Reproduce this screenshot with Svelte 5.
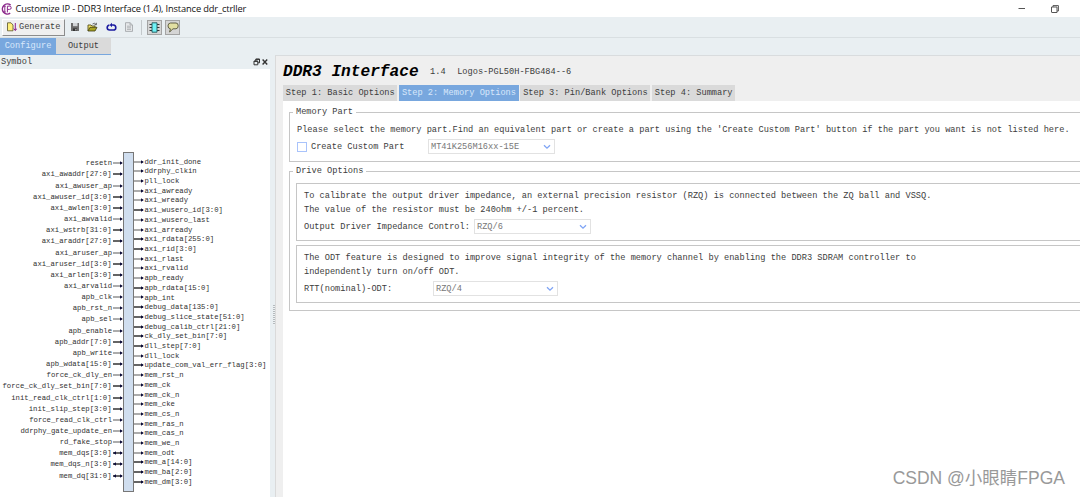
<script lang="ts">
  type Pin = { name: string; bus?: boolean; inout?: boolean };

  const toPin = (name: string): Pin => ({
    name,
    bus: name.endsWith(']'),
    inout: name.startsWith('mem_dq'),
  });

  const inputs = [
    'resetn', 'axi_awaddr[27:0]', 'axi_awuser_ap', 'axi_awuser_id[3:0]', 'axi_awlen[3:0]',
    'axi_awvalid', 'axi_wstrb[31:0]', 'axi_araddr[27:0]', 'axi_aruser_ap', 'axi_aruser_id[3:0]',
    'axi_arlen[3:0]', 'axi_arvalid', 'apb_clk', 'apb_rst_n', 'apb_sel', 'apb_enable',
    'apb_addr[7:0]', 'apb_write', 'apb_wdata[15:0]', 'force_ck_dly_en',
    'force_ck_dly_set_bin[7:0]', 'init_read_clk_ctrl[1:0]', 'init_slip_step[3:0]',
    'force_read_clk_ctrl', 'ddrphy_gate_update_en', 'rd_fake_stop', 'mem_dqs[3:0]',
    'mem_dqs_n[3:0]', 'mem_dq[31:0]',
  ].map(toPin);

  const outputs = [
    'ddr_init_done', 'ddrphy_clkin', 'pll_lock', 'axi_awready', 'axi_wready',
    'axi_wusero_id[3:0]', 'axi_wusero_last', 'axi_arready', 'axi_rdata[255:0]', 'axi_rid[3:0]',
    'axi_rlast', 'axi_rvalid', 'apb_ready', 'apb_rdata[15:0]', 'apb_int', 'debug_data[135:0]',
    'debug_slice_state[51:0]', 'debug_calib_ctrl[21:0]', 'ck_dly_set_bin[7:0]', 'dll_step[7:0]',
    'dll_lock', 'update_com_val_err_flag[3:0]', 'mem_rst_n', 'mem_ck', 'mem_ck_n', 'mem_cke',
    'mem_cs_n', 'mem_ras_n', 'mem_cas_n', 'mem_we_n', 'mem_odt', 'mem_a[14:0]', 'mem_ba[2:0]',
    'mem_dm[3:0]',
  ].map(toPin);

  const steps = [
    'Step 1: Basic Options',
    'Step 2: Memory Options',
    'Step 3: Pin/Bank Options',
    'Step 4: Summary',
  ];

  let view = $state('Configure');
  let step = $state(1);
  let customPart = $state(false);
</script>

{#snippet wire(pin: Pin)}
  <svg class="wire" width="10" height="6" viewBox="0 0 10 6">
    <path d="M0 3H9" stroke="#111" stroke-width={pin.bus ? 1.3 : 0.7} />
    <path d="M7 1.2L9.8 3L7 4.8Z" fill="#0a0a38" />
    {#if pin.inout}<path d="M3 1.2L0.2 3L3 4.8Z" fill="#0a0a38" />{/if}
  </svg>
{/snippet}

{#snippet combo(value: string, width: number)}
  <button class="combo" style="width: {width}px">
    <span>{value}</span>
    <svg width="8" height="6" viewBox="0 0 8 6">
      <path d="M1 1.2L4 4.2L7 1.2" fill="none" stroke="#7fa4f5" stroke-width="1.3" />
    </svg>
  </button>
{/snippet}

<div class="window">
  <header class="titlebar">
    <svg width="13" height="14" viewBox="0 0 13 14" fill="none" stroke="#8c2a8c">
      <path d="M10.6 3.2A5 5 0 1 0 10.2 11.2" stroke-width="1.5" />
      <path d="M4.8 4.2V10M3.8 4.2h2M3.8 10h2M7.4 10.4V4.2h2.2a1.6 1.6 0 0 1 0 3.2H7.4" stroke-width="1" />
    </svg>
    <span class="caption">Customize IP - DDR3 Interface (1.4), Instance ddr_ctrller</span>
    <svg class="min" width="8" height="8" viewBox="0 0 8 8"><path d="M0.5 3.5H7" stroke="#555" /></svg>
    <svg class="max" width="8" height="8" viewBox="0 0 8 8" fill="none" stroke="#555">
      <path d="M0.5 2H6V7.5H1Q0.5 7.5 0.5 7ZM2 2V0.6H7.4V6H6" stroke-width="1" />
    </svg>
  </header>

  <div class="toolbar">
    <button class="generate">
      <svg width="10" height="10" viewBox="0 0 10 10">
        <path d="M0.5 0.8H4L6 3V8.8H0.5Z" fill="#ffef7a" stroke="#55502a" stroke-width="0.8" />
        <path d="M8.3 1V8M6.8 6.6L8.3 8.6L9.8 6.6" fill="none" stroke="#8c1d8c" stroke-width="1" />
      </svg>
      <span>Generate</span>
    </button>
    <svg class="tool" width="10" height="10" viewBox="0 0 10 10">
      <path d="M1 1H9V9H1Z" fill="#6c6c6c" />
      <path d="M3 1H7.5V4.2H3Z" fill="#d2d5d8" />
      <path d="M3 6.4H7V9H3Z" fill="#333" /><path d="M5.4 7H6.4V8.6H5.4Z" fill="#ddd" />
    </svg>
    <svg class="tool" width="11" height="10" viewBox="0 0 11 10">
      <path d="M1 9V3H4L5 4H8V5.2" fill="#f2e36a" stroke="#55501c" stroke-width="0.9" />
      <path d="M1 9L3 5.3H10L8 9Z" fill="#a8a422" stroke="#3d3b10" stroke-width="0.8" />
      <path d="M5.5 2Q7.5 0.3 9 2.4M9.4 0.8V2.8H7.4" fill="none" stroke="#333" stroke-width="0.7" />
    </svg>
    <svg class="tool" width="11" height="10" viewBox="0 0 11 10" fill="none" stroke="#1b1ba0">
      <path d="M3.4 3C0.4 3.6 0.4 8 3.6 8H7.4C10.6 8 10.6 3.4 7.4 3H5" stroke-width="1.6" />
      <path d="M6 0.8L3.6 3L6 5.2Z" fill="#1b1ba0" stroke="none" />
    </svg>
    <svg class="tool" width="10" height="10" viewBox="0 0 10 10" fill="none" stroke="#a5a8ab">
      <path d="M1.5 0.7H6L8.5 3V9.4H1.5Z" fill="#e6e8ea" stroke-width="0.9" />
      <path d="M3 4.2H7M3 5.8H7M3 7.4H7M6 0.7V3H8.5" stroke-width="0.8" />
    </svg>
    <span class="divider"></span>
    <button class="toggle">
      <svg width="11" height="11" viewBox="0 0 11 11">
        <path d="M0.5 2.5H10.5M0.5 5.5H10.5M0.5 8.5H10.5" stroke="#333" stroke-width="1" />
        <path d="M3 0.8H8V10.2H3Z" fill="#6ff2f6" stroke="#23585c" stroke-width="0.9" />
      </svg>
    </button>
    <button class="toggle">
      <svg width="12" height="11" viewBox="0 0 12 11">
        <path d="M3.5 1H9Q11.2 1 11.2 3.8T9 6.8H6L2.6 10L3.4 6.8Q1 6.6 1 3.9T3.5 1Z" fill="#e2dfa2" stroke="#55533a" stroke-width="0.9" />
      </svg>
    </button>
  </div>

  <nav class="views">
    {#each ['Configure', 'Output'] as name}
      <button class:active={view === name} onclick={() => (view = name)}>{name}</button>
    {/each}
  </nav>

  <div class="body">
    <aside>
      <div class="dock">
        <span>Symbol</span>
        <svg width="17" height="8" viewBox="0 0 17 8" fill="none" stroke="#333">
          <path d="M2.8 3V1H6.5V4.8H4.8M1 3H4.8V6.8H1Z" stroke-width="1" />
          <path d="M1 3.4H4.8M2.8 1.4H6.5" stroke-width="1" />
          <path d="M9.6 1.5L14.2 6.5M14.2 1.5L9.6 6.5" stroke-width="1.4" />
        </svg>
      </div>
      <div class="symbol">
        <div class="pins in">
          {#each inputs as pin}
            <div class="pin"><span class:wide={pin.bus}>{pin.name}</span>{@render wire(pin)}</div>
          {/each}
        </div>
        <div class="block"></div>
        <div class="pins out">
          {#each outputs as pin}
            <div class="pin">{@render wire(pin)}<span>{pin.name}</span></div>
          {/each}
        </div>
      </div>
    </aside>

    <div class="splitter"><i></i></div>

    <main>
      <div class="heading">
        <h1>DDR3 Interface</h1>
        <span>1.4</span>
        <span>Logos-PGL50H-FBG484--6</span>
      </div>
      <nav class="steps">
        {#each steps as label, i}
          <button class:active={step === i} onclick={() => (step = i)}>{label}</button>
        {/each}
      </nav>
      <div class="page">
        <fieldset class="memory">
          <legend>Memory Part</legend>
          <p>Please select the memory part.Find an equivalent part or create a part using the 'Create Custom Part' button if the part you want is not listed here.</p>
          <div class="row">
            <label><input type="checkbox" bind:checked={customPart} />Create Custom Part</label>
            {@render combo('MT41K256M16xx-15E', 127)}
          </div>
        </fieldset>
        <fieldset class="drive">
          <legend>Drive Options</legend>
          <div class="box">
            <p>To calibrate the output driver impedance, an external precision resistor (RZQ) is connected between the ZQ ball and VSSQ.<br />The value of the resistor must be 240ohm +/-1 percent.</p>
            <div class="row">
              <span class="impedance">Output Driver Impedance Control:</span>
              {@render combo('RZQ/6', 117)}
            </div>
          </div>
          <div class="box">
            <p>The ODT feature is designed to improve signal integrity of the memory channel by enabling the DDR3 SDRAM controller to<br />independently turn on/off ODT.</p>
            <div class="row">
              <span class="odt">RTT(nominal)-ODT:</span>
              {@render combo('RZQ/4', 125)}
            </div>
          </div>
        </fieldset>
      </div>
    </main>
  </div>

  <div class="watermark">CSDN @小眼睛FPGA</div>
</div>

<style>
  :global(body) {
    margin: 0;
    overflow: hidden;
  }
  .window {
    position: relative;
    display: flex;
    flex-direction: column;
    width: 1080px;
    height: 497px;
    overflow: hidden;
    background: #e9eff2;
    color: #3c3c3c;
    font: 8.655px/10px "Liberation Mono", monospace;
  }
  .window * {
    box-sizing: border-box;
  }
  svg {
    display: block;
    flex: none;
  }
  button {
    margin: 0;
    padding: 0;
    border: 0;
    background: none;
    font: inherit;
    color: inherit;
    white-space: nowrap;
  }

  .titlebar {
    display: flex;
    align-items: center;
    flex: none;
    height: 17px;
    background: #fff;
    color: #111;
  }
  .caption {
    margin-left: 2.5px;
    font: 9.3px/14px "Open Sans", sans-serif;
    letter-spacing: -0.14px;
    white-space: nowrap;
  }
  .min {
    margin-left: auto;
  }
  .max {
    margin: 0 21px 0 25px;
  }

  .toolbar {
    display: flex;
    align-items: center;
    flex: none;
    height: 21px;
    padding-left: 2px;
    border-bottom: 1px solid #d9dfe2;
  }
  .generate {
    display: flex;
    align-items: center;
    gap: 2px;
    width: 63px;
    height: 17px;
    padding-left: 4px;
    border: 1px solid #fff;
    border-right-color: #8c8c8c;
    border-bottom-color: #8c8c8c;
    background: #efefef;
  }
  .tool {
    margin-left: 7.4px;
  }
  .generate + .tool {
    margin-left: 5px;
  }
  .divider {
    width: 1px;
    height: 15px;
    margin: 0 7px 0 7px;
    background: #c3c8cb;
  }
  .toggle {
    display: flex;
    align-items: center;
    justify-content: center;
    width: 15px;
    height: 15px;
    margin: 0 3px 0 -2px;
    border: 1px solid #a3a3a3;
    background: #d5d5d5;
  }
  .toggle + .toggle {
    margin-left: 0;
  }

  .views {
    display: flex;
    flex: none;
    height: 17px;
  }
  .views button {
    width: 55px;
    border-bottom: 1px solid #78a7de;
    background: #dadada;
  }
  .views button:first-child {
    width: 56px;
  }
  .views button.active {
    background: #78a7de;
    color: #d8e8fb;
  }

  .body {
    display: flex;
    flex: 1;
    min-height: 0;
  }
  aside {
    display: flex;
    flex-direction: column;
    width: 270px;
  }
  .dock {
    display: flex;
    align-items: center;
    justify-content: space-between;
    flex: none;
    height: 14px;
    padding: 0 0 1px 1px;
  }
  .symbol {
    display: flex;
    flex: 1;
    min-height: 0;
    padding-top: 83px;
    background: #fff;
    font-size: 7.27px;
    color: #303030;
  }
  .pins {
    display: flex;
    flex-direction: column;
  }
  .pins.in {
    width: 123px;
    padding-top: 5.7px;
  }
  .pins.out {
    padding-top: 4.8px;
  }
  .pin {
    display: flex;
    align-items: center;
    flex: none;
  }
  .in .pin {
    justify-content: flex-end;
    gap: 1px;
    height: 11.17px;
  }
  .out .pin {
    gap: 0.4px;
    height: 9.716px;
  }
  .pin span.wide {
    margin-right: 0.5px;
  }
  .block {
    width: 11px;
    height: 340px;
    border: 1px solid #777;
    background: #d0deef;
  }

  .splitter {
    display: flex;
    justify-content: flex-end;
    width: 5px;
    padding-top: 250px;
  }
  .splitter i {
    width: 2px;
    height: 20px;
    background: repeating-linear-gradient(#b4babd 0 1px, #eef2f4 1px 2px);
  }

  main {
    display: flex;
    flex-direction: column;
    flex: 1;
    min-width: 0;
    padding-left: 7px;
    border-top: 1px solid #d9dcde;
    border-left: 1px solid #dadada;
    background: #efefef;
  }
  .heading {
    display: flex;
    align-items: center;
    gap: 11.5px;
    flex: none;
    height: 29px;
    padding-top: 2px;
  }
  h1 {
    margin: 0;
    font: italic bold 16.15px/18px "Liberation Mono", monospace;
    color: #000;
  }
  .steps {
    display: flex;
    flex: none;
    height: 16px;
    gap: 1.6px;
  }
  .steps button {
    padding: 0 2.8px;
    background: #dadada;
  }
  .steps button.active {
    background: #78a7de;
    color: #d8e8fb;
  }

  .page {
    flex: 1;
    padding: 6px 0 0 6px;
    background: #fff;
  }
  fieldset {
    min-width: 0;
    margin: 0;
    padding: 0 0 0 6px;
    border: 1px solid #c6c6c6;
    border-right: 0;
  }
  legend {
    height: 10px;
    margin-left: -3px;
    padding: 0 3px;
  }
  p {
    margin: 0;
    line-height: 14px;
    white-space: nowrap;
  }
  .row {
    display: flex;
    align-items: center;
    height: 15px;
  }
  .memory {
    height: 55px;
    padding-left: 7px;
  }
  .memory legend {
    margin-left: -4px;
  }
  .memory p {
    padding: 6px 0 2px;
  }
  label {
    display: flex;
    align-items: center;
    width: 131px;
  }
  input {
    appearance: none;
    width: 10px;
    height: 10px;
    margin: 0 4px 0 0;
    border: 1px solid #a9c3fb;
    background: #fff;
  }
  input:checked {
    background: #78a7de;
  }
  .drive {
    height: 145px;
    margin-top: 4px;
    padding-top: 7px;
  }
  .box {
    height: 58px;
    margin-bottom: 4px;
    padding: 5px 0 0 7px;
    border: 1px solid #c6c6c6;
    border-right: 0;
  }
  .box .row {
    margin-top: 2px;
  }
  .impedance {
    width: 170px;
  }
  .odt {
    width: 129px;
  }
  .combo {
    display: flex;
    align-items: center;
    justify-content: space-between;
    flex: none;
    height: 15px;
    padding: 0 3px 0 2px;
    border: 1px solid #e2e2e2;
    background: #fff;
    color: #777;
  }

  .watermark {
    position: absolute;
    right: 15px;
    bottom: 8px;
    font: 17.5px/22px "Liberation Sans", "Noto Sans CJK SC", sans-serif;
    color: #999;
    white-space: nowrap;
  }
</style>
